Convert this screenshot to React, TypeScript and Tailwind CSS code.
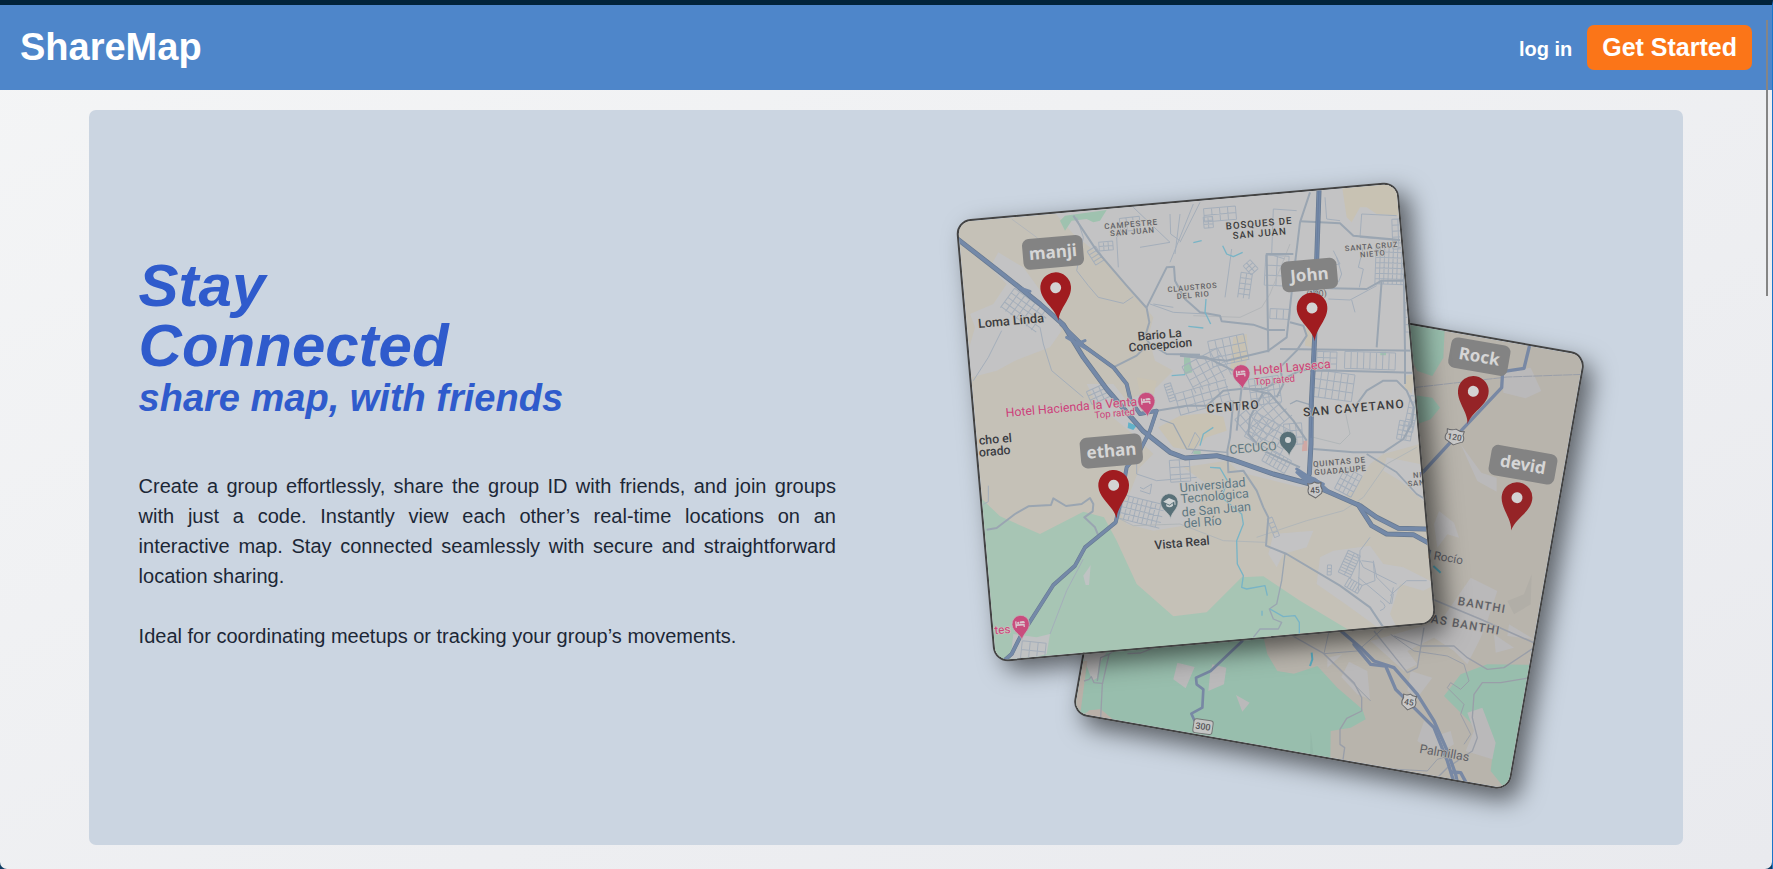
import type { ReactNode } from "react";

type Tone = "dark" | "soft" | "pink" | "slate";

const toneFill: Record<Tone, string> = {
  dark: "#3b3c41",
  soft: "#5f6168",
  pink: "#cd4178",
  slate: "#5f7883",
};

type LabelProps = {
  x: number;
  y: number;
  size: number;
  angle: number;
  tone?: Tone;
  caps?: boolean;
  halo?: string;
  children: string;
};

function Label({ x, y, size, angle, tone = "dark", caps = false, halo = "#c6c4be", children }: LabelProps) {
  return (
    <text
      x={x}
      y={y}
      transform={`rotate(${angle} ${x} ${y})`}
      textAnchor="middle"
      fontSize={size}
      fontWeight={tone === "dark" || caps ? 500 : 400}
      fill={toneFill[tone]}
      stroke={halo}
      strokeWidth={4}
      strokeLinejoin="round"
      paintOrder="stroke"
      className={caps ? "tracking-widest" : undefined}
    >
      {children}
    </text>
  );
}

function Person({ x, y, angle, name, width, badge, fill }: { x: number; y: number; angle: number; name: string; width: number; badge: [number, number]; fill: string }) {
  return (
    <g>
      <g transform={`translate(${badge[0]} ${badge[1]}) rotate(${angle})`}>
        <rect x={-width / 2} y={-46} width={width} height={92} rx={20} fill="#838383" />
        <text y={17} textAnchor="middle" fontSize={51} fontWeight={700} fill="#d6d6d6" className="font-['Noto_Sans',sans-serif]">
          {name}
        </text>
      </g>
      <g transform={`translate(${x} ${y}) rotate(${angle})`}>
        <path d="M0 100C-5 62-46 38-46 0A46 46 0 0 1 46 0C46 38 5 62 0 100Z" fill={fill} />
        <circle r={16.5} fill="#d3d3d3" />
      </g>
    </g>
  );
}

function Poi({ x, y, kind }: { x: number; y: number; kind: "hotel" | "school" | "place" }) {
  return (
    <g transform={`translate(${x} ${y}) rotate(-5)`}>
      <path
        d="M0 49C-3 30-26 22-26 0A26 26 0 0 1 26 0C26 22 3 30 0 49Z"
        fill={kind === "hotel" ? "#c94d7d" : "#587078"}
        stroke="#bfc0c2"
        strokeWidth={2}
      />
      {kind === "hotel" && (
        <g fill="#d9c6ce">
          <path d="M-16-9h4v9h24v10h-4v-5h-20v5h-4Z" />
          <circle cx={-7} cy={-4} r={3.6} />
          <path d="M-2-8h10q5 0 5 6H-2Z" />
        </g>
      )}
      {kind === "school" && (
        <g fill="#cfd3d4">
          <path d="M-18-3 0-13 18-3 0 7Z" />
          <path d="M-10 4v7q10 8 20 0V4L0 10Z" />
          <path d="M15-3h3v12h-3Z" />
        </g>
      )}
      {kind === "place" && <circle r={9} fill="#cfd3d4" />}
    </g>
  );
}

function Shield({ x, y, angle, text }: { x: number; y: number; angle: number; text: string }) {
  return (
    <g transform={`translate(${x} ${y}) rotate(${angle})`}>
      <path
        d={
          text.length > 2
            ? "M-26 -20Q-13 -16 0 -23Q13 -16 26 -20L24 -8Q31 2 26 12Q17 16 0 25Q-17 16 -26 12Q-31 2 -24 -8Z"
            : "M-20 -20Q-10 -16 0 -23Q10 -16 20 -20L18 -9Q24 2 19 12Q13 16 0 25Q-13 16 -19 12Q-24 2 -18 -9Z"
        }
        fill="#c9c9c9"
        stroke="#6a6a6c"
        strokeWidth={3}
      />
      <text y={10} textAnchor="middle" fontSize={25} fontWeight={500} fill="#55565a">
        {text}
      </text>
    </g>
  );
}

function Streets({ x, y, w, h, step, angle, cross = step }: { x: number; y: number; w: number; h: number; step: number; angle: number; cross?: number }) {
  const parts: string[] = [];
  for (let i = 0; i <= w; i += step) parts.push(`M${i - w / 2} ${-h / 2}v${h}`);
  for (let j = 0; j <= h; j += cross) parts.push(`M${-w / 2} ${j - h / 2}h${w}`);
  return <path d={parts.join("")} transform={`translate(${x} ${y}) rotate(${angle})`} />;
}

function MapCard({ tilt, cx, cy, land, label, className, children }: { tilt: number; cx: number; cy: number; land: string; label: string; className: string; children: ReactNode }) {
  return (
    <div className={`absolute size-[444px] overflow-hidden rounded-[15px] border-2 border-[#434343] shadow-[10px_10px_24px_rgba(0,0,0,0.55)] ${className}`}>
      <svg
        viewBox="0 0 1320 1320"
        role="img"
        aria-label={label}
        strokeLinejoin="round"
        className="block size-full font-[Roboto,sans-serif]"
      >
        <rect width={1320} height={1320} fill={land} />
        <g transform={`translate(660 660) rotate(${tilt}) translate(${-cx} ${-cy})`}>{children}</g>
      </svg>
    </div>
  );
}

function CityMap() {
  const a = -5;
  return (
    <MapCard tilt={5} cx={768} cy={754} land="#c5c1b7" label="Map of San Juan with manji, John and ethan" className="top-0 left-0 -rotate-5">
      <g fill="#c3c3c4">
        <path d="M330 110 400 190 500 270 590 380 640 440 625 500 645 570 700 600 650 650 560 690 520 640 440 640 470 700 590 800 640 850 600 890 560 990 530 1010 560 1060 640 1080 760 1060 800 940 730 890 860 870 900 905 1080 950 1150 940 1200 985 1240 960 1290 880 1330 850 1440 820 1480 860 1500 30 1100 60Z" />
        <path d="M175 245 250 290 330 400 365 480 330 530 225 570 170 600 95 620 85 540 105 470 90 430 160 400 200 340 150 290Z" />
        <path d="M1180 1140 1290 1125 1330 1180 1390 1190 1490 1240 1450 1260 1380 1240 1350 1330 1370 1370 1340 1390 1230 1310 1130 1240 1140 1160Z" />
        <path d="M1340 860 1440 880 1460 1000 1380 930 1330 900Z" />
        <path d="M1000 1090 1120 1080 1100 1130 1030 1150 1010 1190 985 1150Z" />
      </g>
      <g fill="#c8c2b3">
        <path d="M1205 40 1220 140 1235 155 1260 110 1280 110 1310 130 1385 135 1385 30 1200 30Z" />
        <path d="M655 770 720 735 800 728 850 738 860 780 800 800 760 840 700 830Z" />
        <path d="M880 500 920 490 925 560 900 620 870 600Z" />
        <path d="M1100 450 1120 450 1120 530 1095 525Z" />
        <path d="M1395 615 1425 610 1415 670 1395 650Z" />
        <path d="M590 620 650 630 640 680 600 670Z" />
      </g>
      <path d="M100 960 180 1037 300 1090 430 1023 492 1040 530 1110 590 1240 700 1337 800 1325 905 1220 970 1217 1080 1290 1230 1380 1330 1500 100 1600Z" fill="#a7c5b4" />
      <g fill="#9fc2af">
        <path d="M360 150 375 135 500 118 480 150 460 155 440 145 395 150 375 180Z" />
        <path d="M732 560 750 560 757 605 732 612Z" />
        <path d="M1321 543h17v11h-17Z" />
        <path d="M760 840h22v10h-22Z" />
      </g>
      <path d="M430 1215 452 1183 447 1243 437 1243Z" fill="#bfc3c3" />
      <path d="M220 1390 290 1400 330 1390 320 1450 210 1480Z" fill="#c0c2c3" />
      <path d="M1088 812 1102 808 1102 840 1086 842Z" fill="#d0a8a4" />
      <path d="M565 755 590 765 580 778 563 772Z" fill="#62b2c9" />

      <g fill="none" stroke="#a4aeba" strokeWidth={3}>
        <Streets x={255} y={420} w={130} h={72} step={19} angle={36} cross={17} />
        <Streets x={467} y={255} w={30} h={48} step={30} angle={-32} cross={12} />
        <Streets x={498} y={226} w={42} h={26} step={14} angle={-5} cross={13} />
        <Streets x={606} y={1023} w={125} h={72} step={14} angle={14} cross={18} />
        <Streets x={800} y={600} w={120} h={90} step={24} angle={-28} cross={23} />
        <Streets x={865} y={540} w={110} h={80} step={22} angle={-12} cross={26} />
        <Streets x={790} y={680} w={160} h={66} step={26} angle={-16} cross={22} />
        <Streets x={970} y={740} w={140} h={100} step={22} angle={-40} cross={25} />
        <Streets x={985} y={790} w={120} h={80} step={20} angle={28} cross={20} />
        <Streets x={1010} y={870} w={78} h={44} step={13} angle={30} cross={22} />
        <Streets x={975} y={660} w={90} h={80} step={18} angle={-8} cross={20} />
        <Streets x={1060} y={790} w={54} h={63} step={18} angle={-5} cross={21} />
        <Streets x={1180} y={645} w={120} h={81} step={20} angle={8} cross={27} />
        <Streets x={1290} y={570} w={152} h={51} step={19} angle={2} cross={51} />
        <Streets x={1160} y={570} w={60} h={54} step={20} angle={2} cross={18} />
        <Streets x={1352} y={285} w={91} h={112} step={13} angle={2} cross={16} />
        <Streets x={1375} y={190} w={36} h={90} step={18} angle={-2} cross={18} />
        <Streets x={1405} y={440} w={20} h={88} step={20} angle={0} cross={22} />
        <Streets x={1415} y={730} w={28} h={108} step={14} angle={12} cross={18} />
        <Streets x={1225} y={935} w={56} h={72} step={14} angle={28} cross={18} />
        <Streets x={1395} y={780} w={42} h={56} step={14} angle={10} cross={14} />
        <Streets x={840} y={130} w={96} h={40} step={24} angle={-5} cross={20} />
        <Streets x={805} y={155} w={28} h={33} step={14} angle={-5} cross={11} />
        <Streets x={915} y={345} w={34} h={76} step={17} angle={8} cross={16} />
        <Streets x={932} y={290} w={28} h={36} step={14} angle={-42} cross={12} />
        <Streets x={1010} y={300} w={70} h={90} step={35} angle={3} cross={30} />
        <Streets x={1020} y={430} w={60} h={30} step={20} angle={3} cross={30} />
        <Streets x={1228} y={1180} w={40} h={72} step={20} angle={25} cross={9} />
        <Streets x={1240} y={1245} w={45} h={28} step={9} angle={30} cross={28} />
        <Streets x={1168} y={1198} w={12} h={30} step={12} angle={2} cross={10} />
        <Streets x={1000} y={1070} w={16} h={60} step={16} angle={-22} cross={15} />
        <Streets x={570} y={160} w={60} h={40} step={20} angle={-6} cross={20} />
        <Streets x={690} y={665} w={20} h={54} step={20} angle={-18} cross={9} />
        <Streets x={475} y={670} w={60} h={42} step={20} angle={-24} cross={14} />
        <Streets x={280} y={1440} w={72} h={52} step={24} angle={6} cross={26} />
        <Streets x={720} y={900} w={60} h={66} step={30} angle={-4} cross={22} />
        <path d="M300 470 310 520 335 600 430 680M100 630 145 560 185 480M410 140 430 200 410 300 445 345 475 380 550 398 580 378M580 110 690 215 600 230M560 165 530 200 535 290M690 130 692 190 720 210M720 130 705 250M760 100 690 275M630 400 700 425 800 430M700 410 640 400" />
        <path d="M780 95 720 215M875 235 865 310 855 380M985 250 1035 265M1155 80 1160 145 1200 150M1265 130 1260 200 1380 210M1265 130 1370 135M1130 290 1200 280 1180 240M1190 260 1205 310 1195 335M1270 230 1255 290 1270 295 1258 350M1165 385 1230 388 1310 345M1235 388 1245 425M1000 115 1070 120M1000 115 995 250" />
        <path d="M145 945v48l-15 8M430 1165 380 1260 330 1390M600 950 610 955 635 940 630 970 600 960M1370 1240 1270 1190 1250 1150M1300 1170 1310 1220 1360 1270 1355 1300M1255 1220 1350 1300 1360 1250M1290 1100 1260 1140 1255 1260M1265 1170 1300 1175 1305 1230 1265 1245M1460 1230h-60l-50 45M1320 1290q30 20 0 30M590 860v50l60 20 120-10M745 830l20-45 15 20-25 45" />
        <path d="M530 1040 580 1065 720 1060 850 1110 975 1115M950 1100 1100 1050 1210 1020 1270 980 1340 880 1430 830M1120 800 1200 820 1230 790 1215 720" stroke="#b1b6b8" />
        <path d="M760 435 900 440 965 410 990 370 1050 220M215 145 290 200 340 290" stroke="#b3b6b9" />
      </g>
      <g fill="none" stroke="#9aa5b1" strokeWidth={6}>
        <path d="M400 135 470 240 560 345 620 412 628 455 615 500 630 520 680 550 780 552" />
        <path d="M620 410 680 290 702 288 705 330 735 385 780 425 840 435 845 452 940 462 985 478 1035 478" />
        <path d="M1110 65 1080 155 1060 320 1040 500 985 540 860 570 720 555" />
        <path d="M985 545 980 250 1060 250M1080 152 1200 158 1240 195 1380 208" />
        <path d="M1135 352 1280 355 1325 330 1400 330M1325 330 1310 530M1020 535 1440 540" />
        <path d="M1050 455 1090 465 1100 495 1070 540 1020 590 1030 640 1010 680" />
        <path d="M1110 600 1200 600 1420 606M1390 230 1395 540 1395 640" />
        <path d="M650 720 740 705 800 705 850 660 900 655 970 655 1080 600 1150 590" />
        <path d="M720 550 800 560 880 600 905 650 890 780M905 650 990 670 1060 750 1100 810" />
        <path d="M970 665 930 740 925 790 970 840 1080 890" />
        <path d="M880 690 870 800 862 840 865 905 910 900 950 960 970 1010 985 1040 978 1125 1040 1150 1200 1245 1290 1310 1330 1370" />
        <path d="M1240 715 1280 660 1330 630 1370 630 1400 660 1422 710 1415 760 1390 805 1330 845 1240 845 1120 835" />
        <path d="M1280 850 1370 905 1430 970 1480 1000" strokeWidth={5} />
        <path d="M1050 700 1070 690 1120 705M660 745 700 760 740 835 860 845" strokeWidth={4} />
        <path d="M1035 1150 1025 1230 1010 1300 988 1315 1000 1345 1025 1355 1015 1375 960 1375 940 1400" strokeWidth={4} />
        <path d="M140 1077 170 1072 225 1030 265 1007 333 1003 340 983 378 1006 425 1000 450 982 460 1000 458 1022 433 1040 465 1070 475 1095" />
        <path d="M520 590 590 555 625 520" />
      </g>
      <g fill="none" stroke="#78b4c6" strokeWidth={4}>
        <path d="M848 225 860 250 880 258 908 245M760 216 785 210M798 385 795 425 812 460M745 467 790 472M780 825 790 790 820 770M810 890 840 892 862 930 845 980 905 1030 910 1060 890 1110 892 1180 910 1215 905 1250 920 1255 975 1245 982 1275M966 1320v15M990 1315 1030 1338 1065 1335 1078 1355v45M695 615 735 612" />
      </g>
      <g fill="none" strokeLinecap="round">
        <g stroke="#66788f" strokeWidth={15}>
          <path d="M40 195 190 312 300 400 370 462 430 560 500 655 610 782 690 845 735 862 830 855 880 868 1000 910 1110 940 1180 970 1260 1005 1310 1040 1375 1073 1480 1076" />
          <path d="M365 462 430 525 520 590 560 640 572 690 600 730 650 720 630 780 600 840 560 890 540 1000 527 1055 435 1130 405 1185 340 1243 240 1400 215 1450 180 1480" strokeWidth={12} />
          <path d="M1138 30 1130 270 1124 500 1114 700 1113 820 1108 910" />
          <path d="M1255 1003 1295 1065 1340 1090 1420 1092 1480 1125" />
        </g>
        <g stroke="#7489a8" strokeWidth={11}>
          <path d="M40 195 190 312 300 400 370 462 430 560 500 655 610 782 690 845 735 862 830 855 880 868 1000 910 1110 940 1180 970 1260 1005 1310 1040 1375 1073 1480 1076" />
          <path d="M365 462 430 525 520 590 560 640 572 690 600 730 650 720 630 780 600 840 560 890 540 1000 527 1055 435 1130 405 1185 340 1243 240 1400 215 1450 180 1480" strokeWidth={9} />
          <path d="M1138 30 1130 270 1124 500 1114 700 1113 820 1108 910" />
          <path d="M1255 1003 1295 1065 1340 1090 1420 1092 1480 1125" />
          <path d="M235 350 270 362M380 500 450 540M1070 895 1108 920 1150 940M410 520 435 510" strokeWidth={9} />
        </g>
        <path d="M1137 40 1130 270 1124 500 1113 800" stroke="#64799a" strokeWidth={2} />
      </g>
      <path d="M1070 905 1125 925 1165 960 1120 952Z" fill="#7489a8" stroke="#7489a8" strokeWidth={8} />

      <Shield x={1125} y={957} angle={a} text="45" />
      <Poi x={619} y={691} kind="hotel" />
      <Poi x={904} y={608} kind="hotel" />
      <Poi x={242} y={1360} kind="hotel" />
      <Poi x={1044} y={808} kind="place" />
      <Poi x={688} y={995} kind="school" />

      <Label x={574} y={169} size={24} angle={a} tone="soft" caps>CAMPESTRE</Label>
      <Label x={578} y={191} size={24} angle={a} tone="soft" caps>SAN JUAN</Label>
      <Label x={958} y={168} size={29} angle={a} caps>BOSQUES DE</Label>
      <Label x={960} y={198} size={29} angle={a} caps>SAN JUAN</Label>
      <Label x={1295} y={235} size={23} angle={a} tone="soft" caps>SANTA CRUZ</Label>
      <Label x={1299} y={257} size={23} angle={a} tone="soft" caps>NIETO</Label>
      <Label x={758} y={358} size={23} angle={a} tone="soft" caps>CLAUSTROS</Label>
      <Label x={760} y={381} size={23} angle={a} tone="soft" caps>DEL RIO</Label>
      <Label x={214} y={463} size={38} angle={a}>Loma Linda</Label>
      <Label x={660} y={504} size={36} angle={a}>Bario La</Label>
      <Label x={662} y={535} size={36} angle={a}>Concepcion</Label>
      <Label x={395} y={722} size={37} angle={a} tone="pink">Hotel Hacienda la Venta</Label>
      <Label x={525} y={738} size={29} angle={a} tone="pink">Top rated</Label>
      <Label x={1057} y={602} size={37} angle={a} tone="pink">Hotel Layseca</Label>
      <Label x={1005} y={638} size={29} angle={a} tone="pink">Top rated</Label>
      <Label x={881} y={720} size={36} angle={a} caps>CENTRO</Label>
      <Label x={1243} y={724} size={36} angle={a} caps>SAN CAYETANO</Label>
      <Label x={940} y={844} size={37} angle={a} tone="slate">CECUCO</Label>
      <Label x={1199} y={882} size={24} angle={a} tone="soft" caps>QUINTAS DE</Label>
      <Label x={1202} y={907} size={24} angle={a} tone="soft" caps>GUADALUPE</Label>
      <Label x={819} y={956} size={38} angle={a} tone="slate">Universidad</Label>
      <Label x={825} y={989} size={38} angle={a} tone="slate">Tecnológica</Label>
      <Label x={830} y={1029} size={38} angle={a} tone="slate">de San Juan</Label>
      <Label x={789} y={1067} size={38} angle={a} tone="slate">del Río</Label>
      <Label x={727} y={1129} size={37} angle={a}>Vista Real</Label>
      <Label x={167} y={818} size={37} angle={a}>cho el</Label>
      <Label x={165} y={854} size={37} angle={a}>orado</Label>
      <Label x={188} y={1389} size={35} angle={a} tone="pink">tes</Label>
      <Label x={1443} y={920} size={23} angle={a} tone="soft" caps>NIÑ</Label>
      <Label x={1430} y={945} size={23} angle={a} tone="soft" caps>SAN</Label>
      <Label x={1130} y={378} size={26} angle={a} tone="soft">(100)</Label>

      <Person x={347} y={351} angle={a} name="manji" width={182} badge={[339, 245]} fill="#a01c20" />
      <Person x={1116} y={412} angle={a} name="John" width={168} badge={[1108, 313]} fill="#a01c20" />
      <Person x={521} y={944} angle={a} name="ethan" width={186} badge={[514, 841]} fill="#a01c20" />
    </MapCard>
  );
}

function RegionMap() {
  const a = 10;
  const halo = "#b9b5ae";
  return (
    <MapCard tilt={-10} cx={1165} cy={1089} land="#b8b4ac" label="Map of Palmillas with Rock and devid" className="right-0 bottom-0 rotate-10">
      <g fill="#98bead">
        <path d="M1380 430 1512 475 1508 560 1475 615 1430 600 1380 500Z" />
        <path d="M1400 670 1475 680 1498 710 1470 745 1400 770Z" />
        <path d="M300 1300 960 1300 970 1405 980 1450 1010 1500 1060 1508 1130 1485 1190 1550 1265 1615 1275 1645 1230 1670 1170 1680 1168 1850 520 1650 480 1615 445 1620 410 1640Z" />
        <path d="M1510 1575 1560 1510 1640 1480 1790 1482 1790 1900 1690 1850 1650 1800 1660 1715 1590 1655Z" />
      </g>
      <g fill="#bab9ba">
        <path d="M1685 605 1770 590 1802 660 1755 682 1688 665Z" />
        <path d="M1560 820 1622 905 1668 920 1668 962 1610 930Z" />
        <path d="M1495 1020 1540 1055 1555 1100 1520 1090 1490 1130 1480 1060Z" />
        <path d="M1590 1220 1670 1260 1640 1350 1620 1400 1580 1480 1540 1440 1480 1400 1400 1440 1430 1480 1390 1500 1290 1410 1500 1350Z" />
        <path d="M1705 1360 1780 1405 1700 1395ZM1660 1390 1720 1430 1665 1445Z" />
        <path d="M1410 1500 1475 1520 1430 1580 1400 1560Z" />
        <path d="M1580 1625 1625 1610 1665 1715 1655 1765 1575 1740 1600 1680Z" />
        <path d="M1450 1650 1500 1690 1530 1680 1540 1720 1490 1750 1430 1710Z" />
        <path d="M710 1475 762 1488 735 1552 698 1525ZM815 1480 857 1490 850 1540 803 1560 808 1510ZM886 1572 927 1595 905 1622Z" />
        <path d="M1225 1472 1280 1500 1288 1585 1250 1570 1202 1518Z" />
        <path d="M1160 1460 1205 1450 1160 1490ZM425 1450 500 1440 475 1480 470 1520 455 1530Z" />
      </g>
      <path d="M1700 1290 1750 1270 1773 1210 1770 1300 1720 1330Z" fill="#b1aea7" />
      <path d="M445 1618 480 1615 520 1648 430 1640ZM415 1470 440 1470 420 1620 400 1600Z" fill="#b9b0a8" />
      <path d="M1110 1680 1120 1760 1108 1760Z" fill="#93b8a8" />

      <g fill="none" stroke="#999ea8" strokeWidth={4}>
        <path d="M1330 660 1550 635 1700 618 1930 610" strokeDasharray="28 2" strokeWidth={3} />
        <path d="M1440 1270 1620 1345 1790 1420" strokeWidth={5} />
        <path d="M1360 1395 1440 1425 1540 1425 1580 1460 1640 1495 1690 1490 1780 1430" />
        <path d="M1350 1390 1420 1440 1520 1455 1570 1480 1585 1530 1560 1555 1530 1535 1520 1550 1570 1600 1560 1630 1590 1690 1570 1720" strokeWidth={3} />
        <path d="M1770 1520 1680 1535 1625 1535 1600 1570 1595 1640 1610 1700 1595 1740 1520 1790 1480 1830" />
        <path d="M1450 1370 1430 1490 1400 1505 1340 1430 1300 1380" />
        <path d="M1280 1790 1460 1800 1490 1765 1540 1750" strokeWidth={3} />
        <path d="M1030 1380 1150 1448 1240 1535 1263 1580 1263 1620 1218 1642 1198 1675 1198 1720 1212 1730 1205 1780" />
        <path d="M1165 1380 1150 1448 1250 1440 1330 1370" strokeWidth={3} />
        <path d="M530 1430 505 1450 485 1540 480 1640M430 1530 445 1525 452 1517 460 1535 484 1537M505 1450 480 1460 470 1530M560 1448 600 1446 640 1430" />
        <path d="M1150 1450 1290 1590" strokeWidth={3} />
      </g>
      <path d="M1113 1445 1115 1465 1108 1485M1478 1185 1500 1205" fill="none" stroke="#58a9bd" strokeWidth={6} />
      <g fill="none" strokeLinecap="round" stroke="#7888a4" strokeWidth={10}>
        <path d="M1775 490 1750 592 1686 602 1683 650 1570 770 1450 900 1330 1020" />
        <path d="M905 1410 810 1500 766 1520 768 1540 788 1555 785 1610 752 1628 762 1650" strokeWidth={8} />
        <path d="M1190 1370 1260 1430 1300 1470 1360 1490 1430 1570 1480 1650 1520 1740 1545 1810 1555 1860" />
        <path d="M1240 1420 1290 1480 1335 1485 1365 1555 1420 1610 1480 1670 1520 1770 1548 1860" />
        <path d="M1535 1803 1560 1805 1590 1860" />
      </g>
      <Shield x={1542} y={797} angle={a} text="120" />
      <Shield x={1405} y={1592} angle={a} text="45" />
      <g transform="translate(787 1667) rotate(8)">
        <rect x={-29} y={-21} width={58} height={42} rx={8} fill="#c4c5c4" stroke="#747676" strokeWidth={3} />
        <text y={9} textAnchor="middle" fontSize={27} fontWeight={500} fill="#55565a">300</text>
      </g>

      <Label x={1503} y={1169} size={35} angle={a} tone="soft" halo={halo}>El Rocío</Label>
      <Label x={1622} y={1314} size={35} angle={a} caps tone="soft" halo={halo}>BANTHI</Label>
      <Label x={1562} y={1371} size={35} angle={a} caps tone="soft" halo={halo}>LAS BANTHI</Label>
      <Label x={1509} y={1758} size={37} angle={a} tone="soft" halo={halo}>Palmillas</Label>

      <Person x={1598} y={661} angle={a} name="Rock" width={180} badge={[1616, 557]} fill="#952427" />
      <Person x={1729} y={980} angle={a} name="devid" width={200} badge={[1747, 881]} fill="#952427" />
    </MapCard>
  );
}

export default function App() {
  return (
    <div className="relative flex min-h-screen flex-col border-t-[5px] border-r border-t-[#02233a] border-r-[#1a75c8] bg-[#0f3c63] font-['Liberation_Sans',Arial,sans-serif]">
      <div className="flex flex-1 flex-col rounded-b-[7px] bg-linear-to-br from-[#f4f5f6] to-[#e9eaee]">
        <header className="flex items-center justify-between bg-[#4e86ca] px-5 py-5 text-white">
          <a href="#home" className="text-[38px] leading-[45px] font-bold">
            ShareMap
          </a>
          <nav className="flex items-baseline gap-[15px] font-bold">
            <a href="#login" className="text-[20px] leading-[30px]">
              log in
            </a>
            <button type="button" className="rounded-[7px] bg-[#fb7518] px-[15px] py-[5px] text-[25px] leading-[35px]">
              Get Started
            </button>
          </nav>
        </header>

        <main className="mx-auto mt-5 mb-6 grid w-9/10 flex-1 grid-cols-2 rounded-[7px] bg-[#cbd5e1]">
          <section className="flex flex-col justify-center px-[50px] pb-12">
            <h1 className="text-[60px] leading-[60px] font-bold text-[#2f5bcc] italic">
              Stay
              <br />
              Connected
            </h1>
            <h2 className="text-[38px] leading-[45px] font-bold text-[#2f5bcc] italic">share map, with friends</h2>
            <p className="mt-[50px] text-justify text-[20px] leading-[30px] text-[#1c2736]">
              Create a group effortlessly, share the group ID with friends, and join groups with just a code. Instantly view each
              other’s real-time locations on an interactive map. Stay connected seamlessly with secure and straightforward location
              sharing.
            </p>
            <p className="mt-[30px] text-[20px] leading-[30px] text-[#1c2736]">
              Ideal for coordinating meetups or tracking your group’s movements.
            </p>
          </section>
          <section className="flex items-center justify-center pr-11">
            <div className="relative h-[556px] w-[577px]">
              <RegionMap />
              <CityMap />
            </div>
          </section>
        </main>
      </div>
      <div className="absolute top-[15px] right-1 h-[276px] w-[2px] bg-[#858585]" />
    </div>
  );
}
